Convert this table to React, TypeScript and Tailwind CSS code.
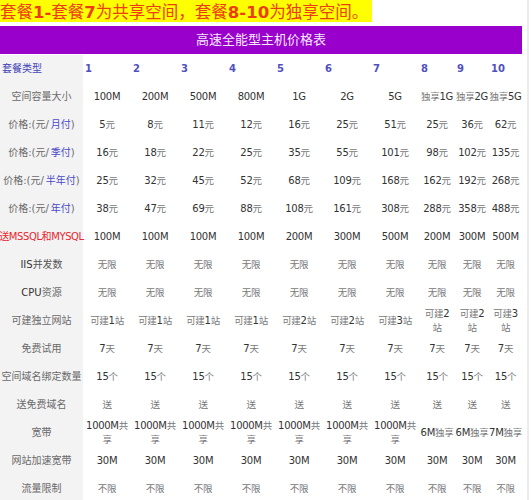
import React from "react";

const CJK_RE = /[\u2E80-\u9FFF\uFF00-\uFFEF\u3000-\u303F]/;

function Mixed({ text, cjk, latin }: { text: string; cjk: string; latin: string }) {
  const parts: { t: string; c: boolean }[] = [];
  for (const ch of text) {
    const c = CJK_RE.test(ch);
    const last = parts[parts.length - 1];
    if (last && last.c === c) last.t += ch;
    else parts.push({ t: ch, c });
  }
  return (
    <>
      {parts.map((p, i) => (
        <span key={i} className={p.c ? cjk : latin}>
          {p.t}
        </span>
      ))}
    </>
  );
}

type Row = { label: React.ReactNode; values: string[] };

const rep = (v: string, n: number) => Array.from({ length: n }, () => v);

const gray = "text-[#6a6a6a]";
const blue = "text-[#4a4ac8] ml-[2px]";

const priceLabel = (k: string) => (
  <>
    <span className={gray}>价格:(元/</span>
    <span className={blue}>{k}</span>
    <span className={gray}>)</span>
  </>
);

const rows: Row[] = [
  {
    label: <Mixed text="空间容量大小" cjk={gray} latin="text-[#333]" />,
    values: ["100M", "200M", "500M", "800M", "1G", "2G", "5G", "独享1G", "独享2G", "独享5G"],
  },
  {
    label: priceLabel("月付"),
    values: ["5元", "8元", "11元", "12元", "16元", "25元", "51元", "25元", "36元", "62元"],
  },
  {
    label: priceLabel("季付"),
    values: ["16元", "18元", "22元", "25元", "35元", "55元", "101元", "98元", "102元", "135元"],
  },
  {
    label: priceLabel("半年付"),
    values: ["25元", "32元", "45元", "52元", "68元", "109元", "168元", "162元", "192元", "268元"],
  },
  {
    label: priceLabel("年付"),
    values: ["38元", "47元", "69元", "88元", "108元", "161元", "308元", "288元", "358元", "488元"],
  },
  {
    label: <span className="text-[#e8262e] tracking-[-0.4px]">送MSSQL和MYSQL</span>,
    values: ["100M", "100M", "100M", "100M", "200M", "300M", "500M", "200M", "300M", "500M"],
  },
  {
    label: <Mixed text="IIS并发数" cjk="text-[#555]" latin="text-[#333]" />,
    values: rep("无限", 10),
  },
  {
    label: <Mixed text="CPU资源" cjk={gray} latin="text-[#333]" />,
    values: rep("无限", 10),
  },
  {
    label: <Mixed text="可建独立网站" cjk={gray} latin="text-[#333]" />,
    values: [
      "可建1站",
      "可建1站",
      "可建1站",
      "可建1站",
      "可建2站",
      "可建2站",
      "可建3站",
      "可建2|站",
      "可建2|站",
      "可建3|站",
    ],
  },
  {
    label: <Mixed text="免费试用" cjk={gray} latin="text-[#333]" />,
    values: rep("7天", 10),
  },
  {
    label: <Mixed text="空间域名绑定数量" cjk={gray} latin="text-[#333]" />,
    values: rep("15个", 10),
  },
  {
    label: <Mixed text="送免费域名" cjk={gray} latin="text-[#333]" />,
    values: rep("送", 10),
  },
  {
    label: <Mixed text="宽带" cjk={gray} latin="text-[#333]" />,
    values: [...rep("1000M共|享", 7), "6M独享", "6M独享", "7M独享"],
  },
  {
    label: <Mixed text="网站加速宽带" cjk={gray} latin="text-[#333]" />,
    values: rep("30M", 10),
  },
  {
    label: <Mixed text="流量限制" cjk={gray} latin="text-[#333]" />,
    values: rep("不限", 10),
  },
];

export default function App() {
  return (
    <div className="w-[529px] min-h-[500px] border-r-2 border-[#ececec] bg-white font-['DejaVu_Sans','Noto_Sans_CJK_SC',sans-serif]">
      <div className="inline-block h-[22px] bg-[#ffff00] pr-[4px] text-[16.5px] leading-[22px] text-[#ee3c12] whitespace-nowrap font-['Noto_Sans_CJK_SC',sans-serif]">
        套餐<b className="font-['DejaVu_Sans',sans-serif]">1-</b>套餐
        <b className="font-['DejaVu_Sans',sans-serif]">7</b>为共享空间，套餐
        <b className="font-['DejaVu_Sans',sans-serif]">8-10</b>为独享空间。
      </div>
      <div className="mt-px flex h-[28px] w-[522px] items-center justify-center bg-[#9900cc] text-[13px] text-[#f3e8ff]">
        高速全能型主机价格表
      </div>
      <div className="mt-px grid w-[522px] grid-cols-[83px_repeat(7,48px)_36px_34px_33px] auto-rows-[28px] text-[10px] leading-[14px]">
        <div className="flex items-center bg-[#f3f3f3] pl-[2px] text-[#4444b8]">套餐类型</div>
        {Array.from({ length: 10 }, (_, i) => (
          <div key={i} className="flex items-center pl-[2px] font-bold text-[#5050c0]">
            {i + 1}
          </div>
        ))}
        {rows.map((r, ri) => (
          <React.Fragment key={ri}>
            <div className="flex items-center justify-center whitespace-nowrap bg-[#f3f3f3] text-center">
              {r.label}
            </div>
            {r.values.map((v, vi) => (
              <div key={vi} className="flex flex-col items-center justify-center">
                {v.split("|").map((line, li) => (
                  <div key={li} className="h-[14px] whitespace-nowrap text-center leading-[14px] tracking-[-0.3px]">
                    <Mixed text={line} cjk="text-[#777] text-[9.5px]" latin="text-[#333]" />
                  </div>
                ))}
              </div>
            ))}
          </React.Fragment>
        ))}
      </div>
    </div>
  );
}
